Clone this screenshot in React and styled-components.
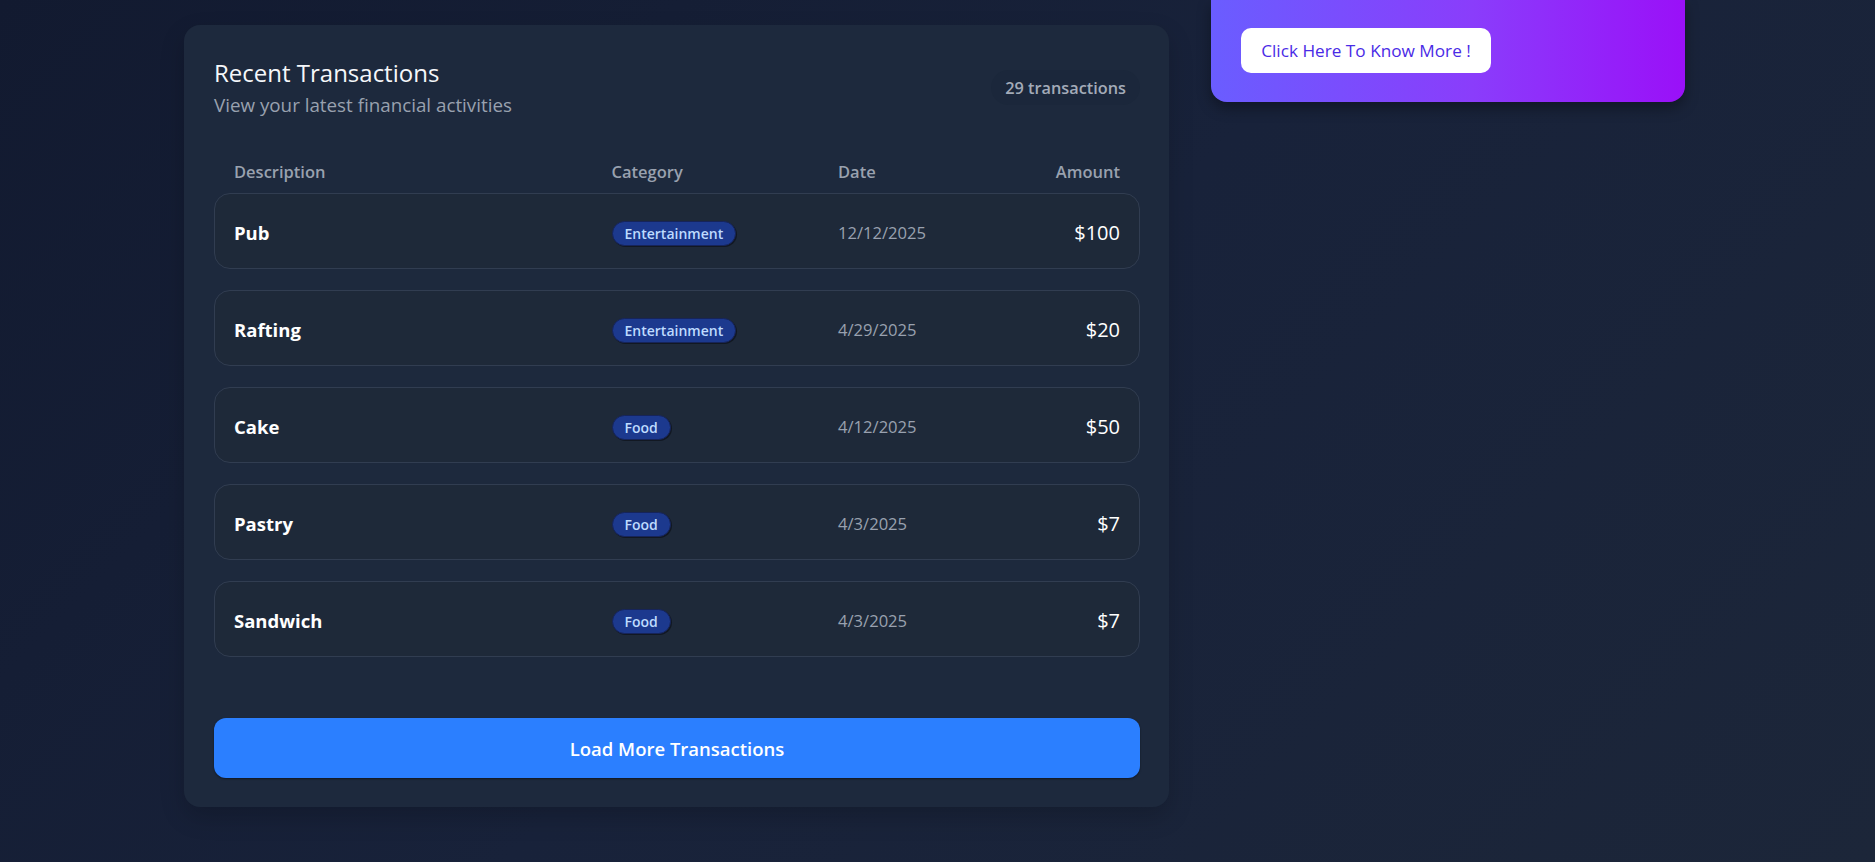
import React from 'react';
import styled, { createGlobalStyle } from 'styled-components';

const GlobalStyle = createGlobalStyle`
  * {
    box-sizing: border-box;
  }
  body {
    margin: 0;
    font-family: "Open Sans", "Noto Sans", sans-serif;
    background: linear-gradient(135deg, #121a30 0%, #18223a 50%, #1c2639 100%);
    min-height: 100vh;
    color: #ffffff;
  }
`;

const transactions = [
  { id: 1, description: 'Pub', category: 'Entertainment', date: '12/12/2025', amount: 100 },
  { id: 2, description: 'Rafting', category: 'Entertainment', date: '4/29/2025', amount: 20 },
  { id: 3, description: 'Cake', category: 'Food', date: '4/12/2025', amount: 50 },
  { id: 4, description: 'Pastry', category: 'Food', date: '4/3/2025', amount: 7 },
  { id: 5, description: 'Sandwich', category: 'Food', date: '4/3/2025', amount: 7 },
];

const App = () => {
  return (
    <>
      <GlobalStyle />
      <Page>
        <TransactionsCard>
          <CardHeader>
            <div>
              <CardTitle>Recent Transactions</CardTitle>
              <CardSubtitle>View your latest financial activities</CardSubtitle>
            </div>
            <CountPill>29 transactions</CountPill>
          </CardHeader>

          <TableHead>
            <Cell $span={5}>Description</Cell>
            <Cell $span={3}>Category</Cell>
            <Cell $span={2}>Date</Cell>
            <Cell $span={2} $right>Amount</Cell>
          </TableHead>

          <RowList>
            {transactions.map((tx) => (
              <Row key={tx.id}>
                <Cell $span={5}>
                  <Description>{tx.description}</Description>
                </Cell>
                <Cell $span={3}>
                  <Badge>{tx.category}</Badge>
                </Cell>
                <Cell $span={2}>
                  <DateText>{tx.date}</DateText>
                </Cell>
                <Cell $span={2} $right>
                  <Amount>${tx.amount}</Amount>
                </Cell>
              </Row>
            ))}
          </RowList>

          <LoadMoreButton>Load More Transactions</LoadMoreButton>
        </TransactionsCard>

        <SideColumn>
          <PromoCard>
            <PromoButton>Click Here To Know More !</PromoButton>
          </PromoCard>
        </SideColumn>
      </Page>
    </>
  );
};

export default App;

const Page = styled.div`
  display: flex;
  align-items: flex-start;
  gap: 42px;
  padding-left: 184px;
  min-height: 100vh;
`;

const TransactionsCard = styled.section`
  width: 985px;
  margin-top: 25px;
  padding: 32px 29px 29px 30px;
  background-color: #1d293d;
  border-radius: 16px;
  box-shadow: 0 10px 24px rgba(0, 0, 0, 0.18);
`;

const CardHeader = styled.div`
  display: flex;
  align-items: center;
  justify-content: space-between;
`;

const CardTitle = styled.h2`
  margin: 0;
  font-size: 24px;
  line-height: 32px;
  font-weight: 500;
  color: #f5f7fa;
`;

const CardSubtitle = styled.p`
  margin: 4px 0 0;
  font-size: 18.8px;
  line-height: 25px;
  color: #99a1af;
`;

const CountPill = styled.span`
  padding: 0 14px;
  height: 35px;
  display: inline-flex;
  align-items: center;
  border-radius: 999px;
  background-color: rgba(15, 23, 42, 0.08);
  font-size: 16.3px;
  font-weight: 600;
  color: #a3abb8;
`;

const TableHead = styled.div`
  display: grid;
  grid-template-columns: repeat(12, 1fr);
  column-gap: 20px;
  margin-top: 41px;
  padding: 0 20px;
  height: 24px;
  align-items: center;
  font-size: 16.5px;
  font-weight: 600;
  color: #99a1af;
`;

const Cell = styled.div`
  grid-column: span ${(p) => p.$span};
  display: flex;
  align-items: center;
  justify-content: ${(p) => (p.$right ? 'flex-end' : 'flex-start')};
  min-width: 0;
`;

const RowList = styled.div`
  display: flex;
  flex-direction: column;
  gap: 21px;
  margin-top: 10px;
`;

const Row = styled.div`
  display: grid;
  grid-template-columns: repeat(12, 1fr);
  column-gap: 20px;
  align-items: center;
  height: 76px;
  padding: 2px 19px 0;
  background-color: #1e2939;
  border: 1px solid #313d51;
  border-radius: 16px;
`;

const Description = styled.span`
  font-size: 18.5px;
  font-weight: 700;
  color: #ffffff;
`;

const Badge = styled.span`
  display: inline-flex;
  align-items: center;
  height: 25px;
  margin-top: 3px;
  padding: 0 12px;
  border-radius: 999px;
  background-color: #1c398e;
  border: 1px solid #16245a;
  box-shadow: 1px 1px 0 rgba(10, 14, 20, 0.6);
  font-size: 14px;
  font-weight: 600;
  color: #bedbff;
`;

const DateText = styled.span`
  font-size: 16.6px;
  font-weight: 400;
  color: #99a1af;
`;

const Amount = styled.span`
  font-size: 20px;
  font-weight: 500;
  color: #ffffff;
`;

const LoadMoreButton = styled.button`
  display: block;
  width: 100%;
  height: 60px;
  margin-top: 61px;
  border: none;
  border-radius: 12px;
  background-color: #2b7fff;
  box-shadow: 0 1px 2px rgba(0, 0, 0, 0.45);
  font-family: inherit;
  font-size: 18.5px;
  font-weight: 600;
  color: #ffffff;
  cursor: pointer;
`;

const SideColumn = styled.aside`
  width: 474px;
`;

const PromoCard = styled.div`
  padding: 28px 30px 29px;
  border-radius: 0 0 16px 16px;
  background: linear-gradient(90deg, #6a5dff 0%, #8a3dfb 55%, #9a10f8 100%);
  box-shadow: 0 6px 14px rgba(0, 0, 0, 0.35);
`;

const PromoButton = styled.button`
  display: inline-flex;
  align-items: center;
  justify-content: center;
  width: 250px;
  height: 45px;
  border: none;
  border-radius: 10px;
  background-color: #ffffff;
  font-family: inherit;
  font-size: 17.2px;
  font-weight: 500;
  color: #4a2be6;
  cursor: pointer;
`;
